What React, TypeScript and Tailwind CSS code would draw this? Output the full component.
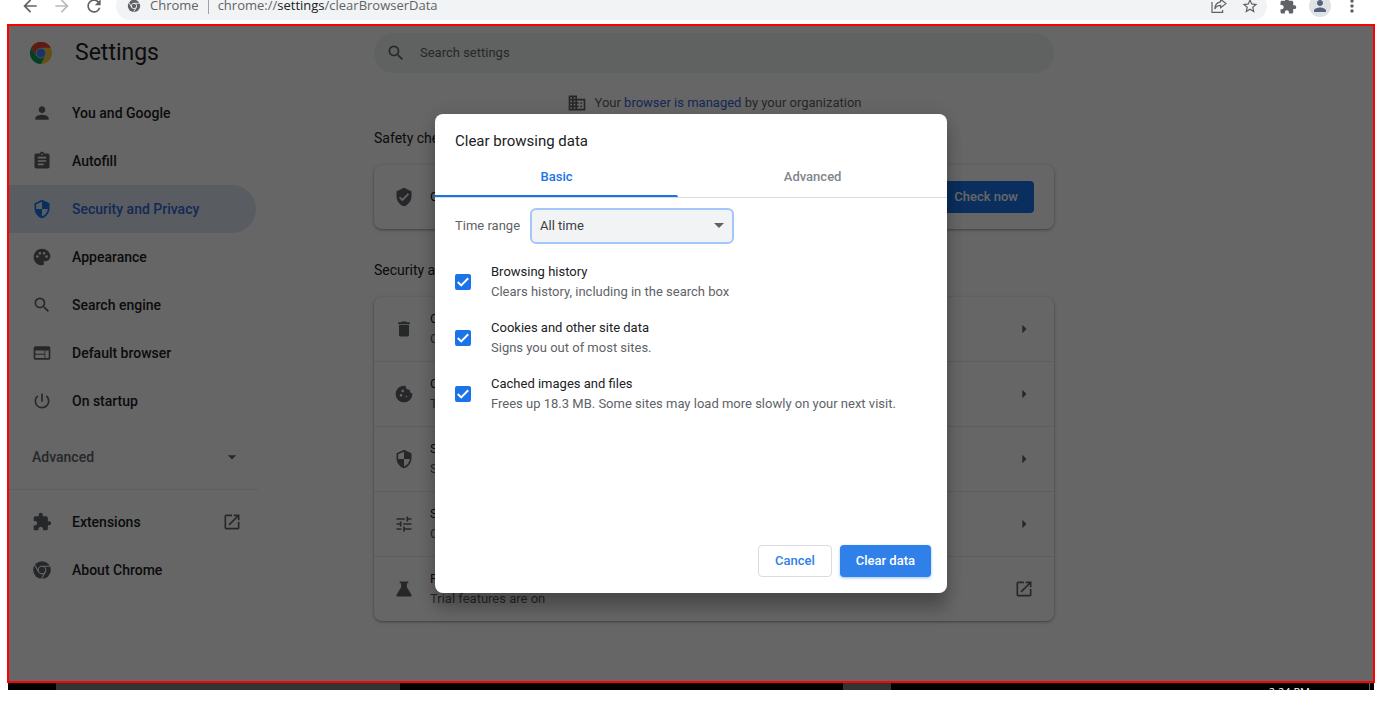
import { useState } from "react";
import type { ReactNode } from "react";
import {
  MdArrowBack,
  MdArrowDropDown,
  MdArrowForward,
  MdArrowRight,
  MdAssignment,
  MdBusiness,
  MdCookie,
  MdDelete,
  MdExtension,
  MdMoreVert,
  MdOpenInNew,
  MdPalette,
  MdPerson,
  MdPowerSettingsNew,
  MdRefresh,
  MdSearch,
  MdSecurity,
  MdStarBorder,
  MdTune,
  MdVerifiedUser,
  MdWeb,
} from "react-icons/md";

function ChromeMono({ className }: { className: string }) {
  return (
    <svg viewBox="0 0 24 24" className={className} aria-hidden="true">
      <circle cx="12" cy="12" r="10.6" fill="currentColor" />
      <g fill="none" stroke="white" strokeWidth="1.3">
        <circle cx="12" cy="12" r="4.6" />
        <path d="M12 7.4H22M8 14.3L3 5.6M16 14.3L11 23" />
      </g>
    </svg>
  );
}

function ChromeLogo() {
  return (
    <svg viewBox="0 0 48 48" className="size-6" aria-hidden="true">
      <path d="M24 24L4.9 13A22 22 0 0 1 43.1 13z" fill="#ea4335" />
      <path d="M4.9 13A22 22 0 0 0 24 46L33.5 29.5 24 24 14.5 29.5z" fill="#0f9d58" />
      <path d="M43.1 13A22 22 0 0 1 24 46L33.5 29.5 24 13z" fill="#fbc934" />
      <path d="M4.9 13L14.5 29.5 24 24V13H43.1A22 22 0 0 0 4.9 13z" fill="#ea4335" />
      <circle cx="24" cy="24" r="10.4" fill="#d0d8e8" />
      <circle cx="24" cy="24" r="9" fill="#4285f4" />
    </svg>
  );
}

function Flask() {
  return (
    <svg viewBox="0 0 24 24" className="size-5" fill="currentColor" aria-hidden="true">
      <path d="M6.8 3h10.4v2.2h-1.7v4.6l5.4 9c.7 1.2 0 2.2-1.3 2.2H4.4c-1.3 0-2-1-1.3-2.2l5.4-9V5.2H6.8z" />
    </svg>
  );
}

function ShareIcon() {
  return (
    <svg viewBox="0 0 16 16" className="size-4" fill="none" stroke="currentColor" strokeWidth="1.2" aria-hidden="true">
      <path d="M1 4v10.4h10.6V12M9.6 1.4L15 5.6 9.6 9.8V7.4C6.6 7.4 5 8.6 3.8 11c.2-4 2.4-6.800 5.800-7.200z" />
    </svg>
  );
}

function Toolbar() {
  return (
    <header className="flex h-6 items-end overflow-hidden bg-white pb-1 text-[#5f6368]">
      <div className="flex h-7 flex-1 shrink-0 items-center">
        <nav className="flex w-29 shrink-0 items-center gap-3 pl-5" aria-label="Toolbar">
          <button type="button" aria-label="Back"><MdArrowBack className="size-5" /></button>
          <button type="button" aria-label="Forward" className="text-[#bababa]"><MdArrowForward className="size-5" /></button>
          <button type="button" aria-label="Reload"><MdRefresh className="size-5" /></button>
        </nav>
        <div className="flex h-7 flex-1 items-center rounded-full bg-[#f1f3f4] pr-2 pl-[11px] font-['Open_Sans',sans-serif] text-[13px]">
          <ChromeMono className="size-3.5" />
          <span className="ml-[9px]">Chrome</span>
          <span className="mx-[9px] h-4 w-px bg-[#9aa0a6]" />
          <span className="flex-1">
            chrome://<span className="text-[#202124]">settings</span>/clearBrowserData
          </span>
          <button type="button" aria-label="Share"><ShareIcon /></button>
          <button type="button" aria-label="Bookmark" className="ml-3.5"><MdStarBorder className="size-[18px]" /></button>
        </div>
        <div className="flex items-center pr-5 pl-3">
          <button type="button" aria-label="Extensions"><MdExtension className="size-[18px]" /></button>
          <button type="button" aria-label="Profile" className="ml-3 flex size-[22px] items-center justify-center rounded-full bg-[#dee1e6] text-[#56617a]">
            <MdPerson className="size-[18px]" />
          </button>
          <button type="button" aria-label="Menu" className="ml-[11px]"><MdMoreVert className="size-5" /></button>
        </div>
      </div>
    </header>
  );
}

function NavItem({ icon, label, active, external }: { icon: ReactNode; label: string; active?: boolean; external?: boolean }) {
  return (
    <a
      href="#"
      className={
        active
          ? "mr-0.5 flex h-12 items-center rounded-r-full bg-[#dfe7f2] pr-3.5 pl-[23px] font-medium text-[#3367d6]"
          : "mr-0.5 flex h-12 items-center pr-3.5 pl-[23px] font-medium text-[#202124]"
      }
    >
      <span className={active ? "text-[#1a73e8]" : "text-[#5f6368]"}>{icon}</span>
      <span className="ml-5 flex-1">{label}</span>
      {external && <MdOpenInNew className="size-5 text-[#5f6368]" />}
    </a>
  );
}

function Sidebar() {
  return (
    <nav className="w-[249px] shrink-0 pt-[9px] text-sm" aria-label="Settings">
      <NavItem icon={<MdPerson className="size-5" />} label="You and Google" />
      <NavItem icon={<MdAssignment className="size-5" />} label="Autofill" />
      <NavItem icon={<MdSecurity className="size-5" />} label="Security and Privacy" active />
      <NavItem icon={<MdPalette className="size-5" />} label="Appearance" />
      <NavItem icon={<MdSearch className="size-5" />} label="Search engine" />
      <NavItem icon={<MdWeb className="size-5" />} label="Default browser" />
      <NavItem icon={<MdPowerSettingsNew className="size-5" />} label="On startup" />
      <button type="button" className="mt-2 flex h-12 w-full items-center justify-between pr-4 pl-[23px] font-medium text-[#5f6368]">
        Advanced
        <MdArrowDropDown className="size-5" />
      </button>
      <hr className="mt-2 mb-2 border-[#ebebeb]" />
      <NavItem icon={<MdExtension className="size-5" />} label="Extensions" external />
      <NavItem icon={<ChromeMono className="size-5" />} label="About Chrome" />
    </nav>
  );
}

const card = "rounded-lg bg-white shadow-[0_1px_2px_rgba(60,64,67,0.3),0_1px_4px_rgba(60,64,67,0.25)]";

function SettingRow({ icon, title, detail, external }: { icon: ReactNode; title: string; detail: string; external?: boolean }) {
  return (
    <li>
      <a href="#" className="flex h-16 items-center px-5">
        <span className="text-[#5f6368]">{icon}</span>
        <span className="ml-4 flex-1 leading-5">
          <span className="block text-[#202124]">{title}</span>
          <span className="block text-[#5f6368]">{detail}</span>
        </span>
        <span className="text-[#5f6368]">
          {external ? <MdOpenInNew className="size-5" /> : <MdArrowRight className="size-5" />}
        </span>
      </a>
    </li>
  );
}

function Content() {
  return (
    <main className="ml-29 w-full max-w-[680px] text-[13px]">
      <p className="flex items-center justify-center gap-2 pt-[13px] leading-5 text-[#5f6368]">
        <MdBusiness className="size-5" />
        <span>
          Your <a href="#" className="text-[#3367d6]">browser is managed</a> by your organization
        </span>
      </p>
      <h2 className="mt-[15px] text-sm leading-5 text-[#202124]">Safety check</h2>
      <section className={`mt-[17px] flex h-16 items-center px-5 ${card}`}>
        <MdVerifiedUser className="size-5 text-[#5f6368]" />
        <p className="ml-4 flex-1 text-[#202124]">Chrome can help keep you safe from data breaches, bad extensions, and more</p>
        <button type="button" className="h-8 rounded bg-[#1a73e8] px-4 font-medium text-white">Check now</button>
      </section>
      <h2 className="mt-[31px] text-sm leading-5 text-[#202124]">Security and Privacy</h2>
      <ul className={`mt-[17px] divide-y divide-[#ebebeb] ${card}`}>
        <SettingRow icon={<MdDelete className="size-5" />} title="Clear browsing data" detail="Clear history, cookies, cache, and more" />
        <SettingRow icon={<MdCookie className="size-5" />} title="Cookies and other site data" detail="Third-party cookies are blocked in Incognito mode" />
        <SettingRow icon={<MdSecurity className="size-5" />} title="Security" detail="Safe Browsing (protection from dangerous sites) and other security settings" />
        <SettingRow icon={<MdTune className="size-5" />} title="Site Settings" detail="Controls what information sites can use and show" />
        <SettingRow icon={<Flask />} title="Privacy Sandbox" detail="Trial features are on" external />
      </ul>
    </main>
  );
}

function DataOption({ id, title, detail }: { id: string; title: string; detail: string }) {
  const [checked, setChecked] = useState(true);
  return (
    <div className="flex h-14 items-center gap-5">
      <span className="relative size-4 shrink-0">
        <input
          id={id}
          type="checkbox"
          checked={checked}
          onChange={(e) => setChecked(e.target.checked)}
          className="peer block size-4 appearance-none rounded-xs border-2 border-[#5f6368] checked:border-[#1a73e8] checked:bg-[#1a73e8]"
        />
        <svg viewBox="0 0 16 16" className="pointer-events-none absolute inset-0 hidden size-4 peer-checked:block" aria-hidden="true">
          <path d="M2.800 8l3.400 3.400 7-7.200" fill="none" stroke="white" strokeWidth="2" />
        </svg>
      </span>
      <label htmlFor={id} className="leading-5">
        <span className="block text-[#202124]">{title}</span>
        <span className="block text-[#5f6368]">{detail}</span>
      </label>
    </div>
  );
}

function ClearDataDialog() {
  return (
    <div
      role="dialog"
      aria-labelledby="dialog-title"
      className="flex h-[479px] w-full max-w-lg flex-col rounded-lg bg-white text-[13px] shadow-[0_0_16px_rgba(0,0,0,0.12),0_16px_16px_rgba(0,0,0,0.24)]"
    >
      <h1 id="dialog-title" className="px-5 pt-4 text-[15px] leading-[22px] text-[#202124]">Clear browsing data</h1>
      <div role="tablist" className="mt-1 flex h-[42px] border-b border-[#dadce0] font-medium">
        <button type="button" role="tab" aria-selected="true" className="flex flex-auto flex-col justify-end text-[#1a73e8]">
          <span className="w-full pb-2 leading-5">Basic</span>
          <span className="h-0.5 w-full rounded-tr-sm bg-[#1a73e8]" />
        </button>
        <button type="button" role="tab" aria-selected="false" className="flex flex-auto flex-col justify-end text-[#80868b]">
          <span className="w-full pb-2.5 leading-5">Advanced</span>
        </button>
      </div>
      <div className="flex items-center gap-2.5 px-5 pt-2.5">
        <label htmlFor="range" className="text-[#5f6368]">Time range</label>
        <div className="relative">
          <select id="range" className="block h-9 w-[204px] appearance-none rounded-md border-2 border-[#a3c7f9] bg-[#f1f3f4] pr-6 pl-2 text-[#3c4043]">
            <option>All time</option>
          </select>
          <svg viewBox="0 0 10 5" className="pointer-events-none absolute top-[15px] right-2.5 h-[5px] w-2.5" aria-hidden="true">
            <path d="M0 0h10L5 5z" fill="#5f6368" />
          </svg>
        </div>
      </div>
      <div className="flex-1 px-5 pt-2.5">
        <DataOption id="history" title="Browsing history" detail="Clears history, including in the search box" />
        <DataOption id="cookies" title="Cookies and other site data" detail="Signs you out of most sites." />
        <DataOption id="cache" title="Cached images and files" detail="Frees up 18.3 MB. Some sites may load more slowly on your next visit." />
      </div>
      <div className="flex justify-end gap-2 p-4 font-medium">
        <button type="button" className="h-8 rounded border border-[#dadce0] px-4 text-[#2f80e8]">Cancel</button>
        <button type="button" className="h-8 rounded bg-[#2f80e9] px-4 text-white shadow-[0_1px_3px_rgba(26,115,232,0.45)]">Clear data</button>
      </div>
    </div>
  );
}

export default function App() {
  return (
    <div className="bg-white font-[Roboto,sans-serif]">
      <Toolbar />
      <div className="relative mx-[7px] min-h-[659px] overflow-hidden border-2 border-[#ff0000] bg-white">
        <div className="flex h-[54px] items-center">
          <div className="flex w-[365px] shrink-0 items-center gap-[22px] pl-5 text-[23px] text-[#202124]">
            <ChromeLogo />
            Settings
          </div>
          <label className="flex h-10 w-full max-w-[680px] items-center rounded-full bg-[#f0f3f2] pl-3 text-[#5f6368]">
            <MdSearch className="size-5" />
            <span className="sr-only">Search settings</span>
            <input
              type="search"
              placeholder="Search settings"
              className="ml-3.5 flex-1 bg-transparent text-[13px] placeholder:text-[#5f6368]"
            />
          </label>
        </div>
        <div className="flex">
          <Sidebar />
          <Content />
        </div>
        <div className="absolute inset-0 flex items-center justify-center bg-black/60">
          <ClearDataDialog />
        </div>
      </div>
      <footer className="mx-2 flex h-[7px] overflow-hidden bg-black text-xs text-white">
        <span className="w-12 shrink-0" />
        <span className="w-[344px] shrink-0 bg-[#333333]" />
        <span className="w-[443px] shrink-0" />
        <span className="w-12 shrink-0 bg-[#333333]" />
        <span className="flex-1 pt-px pr-[59px] text-right font-['Open_Sans',sans-serif] text-[11px] leading-4">2:24 PM</span>
        <span className="mr-1 w-px bg-[#666666]" />
      </footer>
    </div>
  );
}
